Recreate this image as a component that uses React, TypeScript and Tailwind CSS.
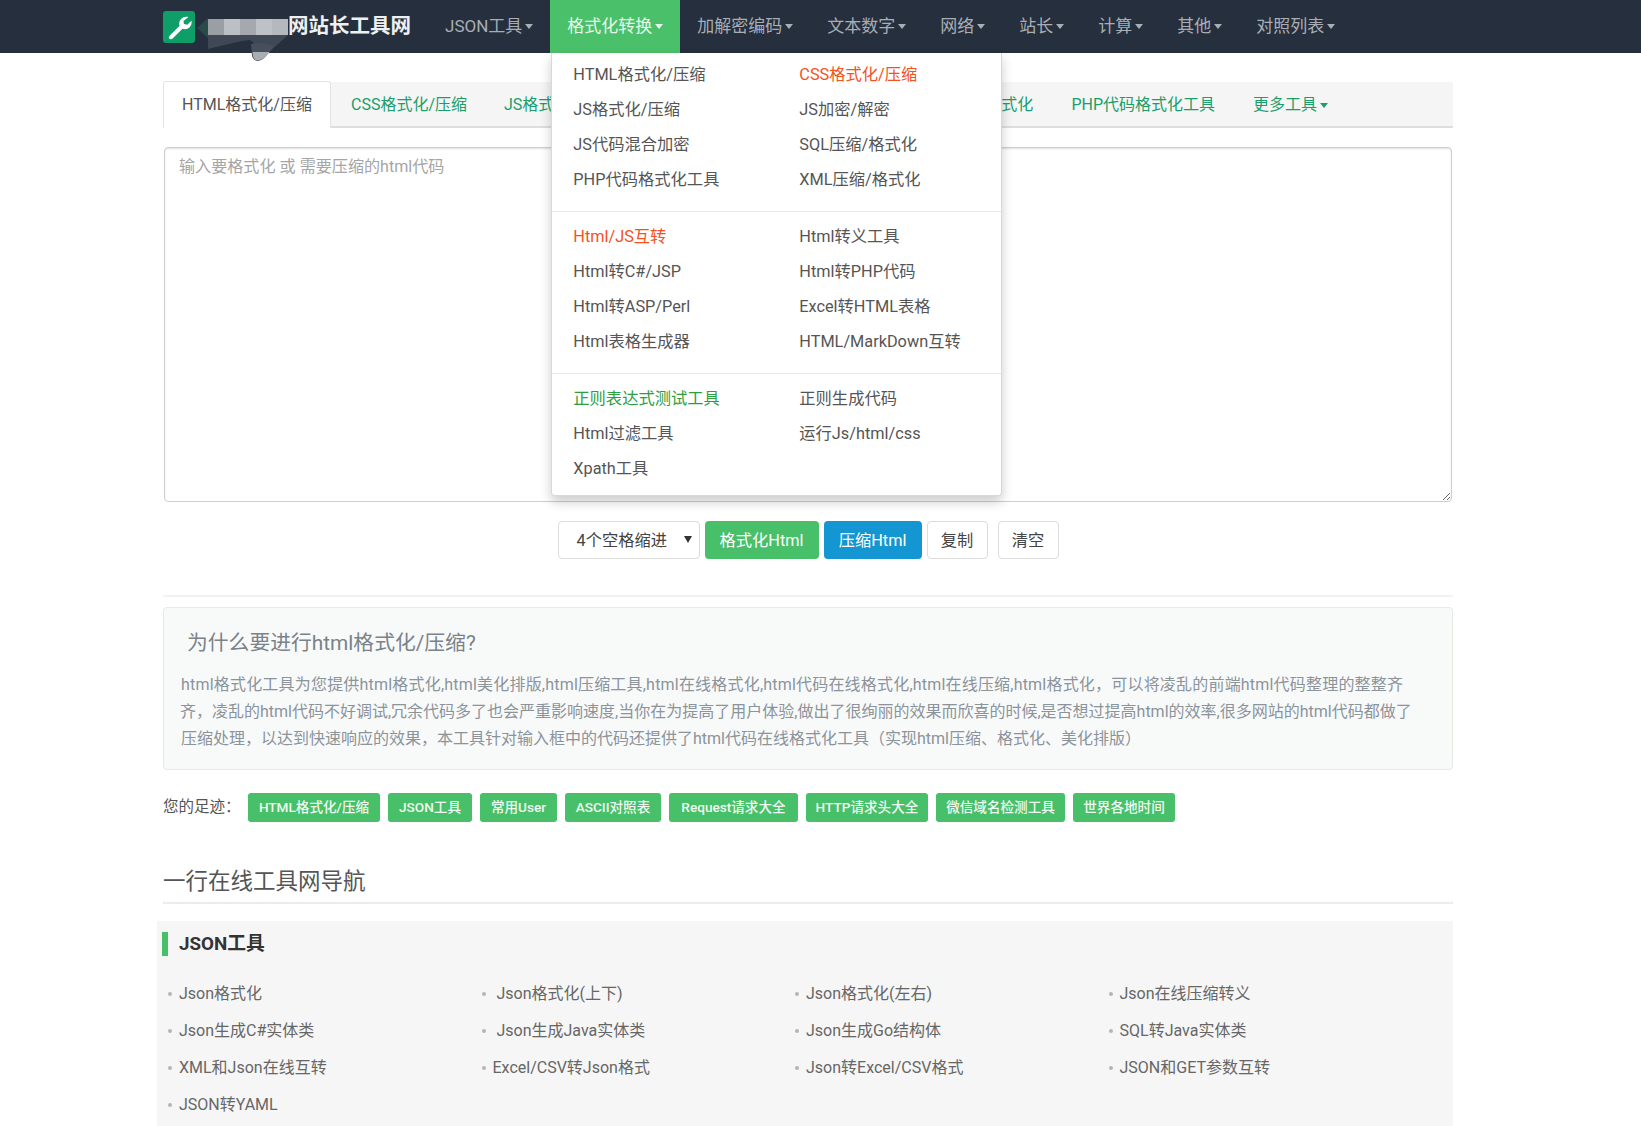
const navItems = ["JSON工具", "格式化转换", "加解密编码", "文本数字", "网络", "站长", "计算", "其他", "对照列表"];

type MenuLink = { text: string; color?: string };

const menuGroups: MenuLink[][] = [
  [
    { text: "HTML格式化/压缩" },
    { text: "CSS格式化/压缩", color: "text-[#f4511e]" },
    { text: "JS格式化/压缩" },
    { text: "JS加密/解密" },
    { text: "JS代码混合加密" },
    { text: "SQL压缩/格式化" },
    { text: "PHP代码格式化工具" },
    { text: "XML压缩/格式化" },
  ],
  [
    { text: "Html/JS互转", color: "text-[#f4511e]" },
    { text: "Html转义工具" },
    { text: "Html转C#/JSP" },
    { text: "Html转PHP代码" },
    { text: "Html转ASP/Perl" },
    { text: "Excel转HTML表格" },
    { text: "Html表格生成器" },
    { text: "HTML/MarkDown互转" },
  ],
  [
    { text: "正则表达式测试工具", color: "text-[#2e9e3f]" },
    { text: "正则生成代码" },
    { text: "Html过滤工具" },
    { text: "运行Js/html/css" },
    { text: "Xpath工具" },
  ],
];

const footprints = [
  { name: "HTML格式化/压缩", width: "w-[132px]" },
  { name: "JSON工具", width: "w-[84px]" },
  { name: "常用User", width: "w-[77px]" },
  { name: "ASCII对照表", width: "w-[96px]" },
  { name: "Request请求大全", width: "w-[129px]" },
  { name: "HTTP请求头大全", width: "w-[122px]" },
  { name: "微信域名检测工具", width: "w-[129px]" },
  { name: "世界各地时间", width: "w-[102px]" },
];

const jsonTools = [
  "Json格式化",
  "\u00a0Json格式化(上下)",
  "Json格式化(左右)",
  "Json在线压缩转义",
  "Json生成C#实体类",
  "\u00a0Json生成Java实体类",
  "Json生成Go结构体",
  "SQL转Java实体类",
  "XML和Json在线互转",
  "Excel/CSV转Json格式",
  "Json转Excel/CSV格式",
  "JSON和GET参数互转",
  "JSON转YAML",
];

function Caret({ className }: { className: string }) {
  return <span className={`ml-[3px] inline-block h-0 w-0 border-x-[4px] border-t-[5px] border-x-transparent align-middle ${className}`} />;
}

function FormatMenu() {
  return (
    <div className="absolute left-[1px] top-full z-20 w-[451px] rounded-b-[4px] border-x border-b border-[#d8d8d8] bg-white pb-[9px] pt-[4px] shadow-[0_6px_12px_rgba(0,0,0,0.2)]">
      {menuGroups.map((group, i) => (
        <div key={i}>
          {i > 0 && <div className="mb-[7.500px] mt-[13.500px] h-[1px] bg-[#e8e8e8]" />}
          <div className="grid grid-cols-[226px_224px]">
            {group.map((link) => (
              <div key={link.text} className={`h-[35px] whitespace-nowrap pl-[21px] text-[16.300px] font-normal leading-[35px] ${link.color ?? "text-[#555]"}`}>
                {link.text}
              </div>
            ))}
          </div>
        </div>
      ))}
    </div>
  );
}

function TopNav() {
  return (
    <div className="h-[53px] bg-[#252f3d]">
      <div className="ml-[163px] flex h-full w-[1290px] items-center">
        <div className="h-[32px] w-[32px] rounded-[3px] bg-[#0f9d68]">
          <svg width="32" height="32" viewBox="0 0 32 32">
            <path
              d="M25.500 6 C20.800 4.700 16.200 8 16.200 12.600 C16.200 13.400 16.300 14.100 16.600 14.800 L6.800 24.400 C5.500 25.700 5.500 27 6.500 27.800 C7.500 28.700 8.800 28.400 9.900 27.300 L19.500 17.800 C20.300 18.100 21.100 18.200 21.900 18.200 C26.300 18.200 29.500 14 28.400 9.700 L24.300 13.700 L21 13 L20.400 10 Z"
              fill="white"
            />
          </svg>
        </div>
        {/* site name is pixelated out in the picture */}
        <div className="relative ml-[13px] flex h-[16px] w-[80px]">
          <span className="flex-1 bg-[#9a9ea5]" />
          <span className="flex-1 bg-[#bcc0c4]" />
          <span className="flex-1 bg-[#a5a8ae]" />
          <span className="flex-1 bg-[#bec1c5]" />
          <span className="flex-1 bg-[#b5b8bc]" />
          <svg className="absolute left-[-14px] top-[-3px] z-10 overflow-visible" width="110" height="46" viewBox="0 0 110 46">
            <path d="M14 2 L3 12 L14 22 Z" fill="#2b4a4c" />
            <path d="M14 19 L94 19 L82 30 C70 38 66 32 56 24 C40 26 28 30 14 33 Z" fill="#3f4854" />
            <path d="M57 28 C68 26 78 28 80 31 L72 40 C66 47 60 46 58 40 Z" fill="#464f5b" />
            <path d="M58.500 36 L75.500 36 L71 41 C65 46 60 45 59 40 Z" fill="#a9aeb3" />
          </svg>
        </div>
        <div className="whitespace-nowrap text-[20.500px] font-bold text-[#eef0f2]">网站长工具网</div>
        <div className="ml-[17px] flex h-full">
          {navItems.map((item) => {
            const active = item === "格式化转换";
            return (
              <div key={item} className={`relative flex h-full items-center whitespace-nowrap px-[17px] text-[17px] ${active ? "bg-[#4bc06a] text-[#e8f8ec]" : "text-[#a9aeb5]"}`}>
                {item}
                <Caret className={active ? "border-t-[#e8f8ec]" : "border-t-[#a9aeb5]"} />
                {active && <FormatMenu />}
              </div>
            );
          })}
        </div>
      </div>
    </div>
  );
}

function TabBar() {
  return (
    <div className="flex h-[46px] items-center border-b-2 border-[#dedede] bg-[#f5f5f5] pt-[2px] text-[16px] text-[#1a9e6b]">
      <div className="-mb-[2px] flex h-[47px] w-[168px] self-end items-center justify-center rounded-t-[3px] border-x border-t border-[#e4e4e4] bg-white text-[#555]">
        HTML格式化/压缩
      </div>
      <div className="ml-[20px] whitespace-nowrap">CSS格式化/压缩</div>
      <div className="ml-[37px] whitespace-nowrap">JS格式化/压缩</div>
      <div className="ml-[38px] whitespace-nowrap">JS加密/解密</div>
      <div className="ml-[38px] whitespace-nowrap">SQL压缩/格式化</div>
      <div className="ml-[auto] mr-[38px] whitespace-nowrap">XML格式化</div>
      <div className="mr-[38px] whitespace-nowrap">PHP代码格式化工具</div>
      <div className="mr-[125px] whitespace-nowrap">
        更多工具
        <Caret className="border-t-[#1a9e6b]" />
      </div>
    </div>
  );
}

function Toolbar() {
  return (
    <div className="mt-[19px] flex justify-center text-[16.300px]">
      <div className="relative flex h-[38px] w-[142px] items-center rounded-[4px] border border-[#dcdcdc] bg-white pl-[18px] pt-[2px] text-[#444]">
        4个空格缩进
        <span className="absolute right-[7px] top-[14px] h-0 w-0 border-x-[4px] border-t-[7px] border-x-transparent border-t-[#333]" />
      </div>
      <div className="ml-[5px] flex h-[38px] w-[114px] items-center justify-center rounded-[4px] bg-[#48bf69] pt-[2px] text-white">格式化Html</div>
      <div className="ml-[5px] flex h-[38px] w-[98px] items-center justify-center rounded-[4px] bg-[#1396d1] pt-[2px] text-white">压缩Html</div>
      <div className="ml-[5px] flex h-[38px] w-[61px] items-center justify-center rounded-[4px] border border-[#dcdcdc] bg-white pt-[2px] text-[#444]">复制</div>
      <div className="ml-[10px] flex h-[38px] w-[61px] items-center justify-center rounded-[4px] border border-[#dcdcdc] bg-white pt-[2px] text-[#444]">清空</div>
    </div>
  );
}

function Intro() {
  return (
    <div className="mt-[10px] h-[163px] rounded-[4px] border border-[#e3ebe3] bg-[#f8fafa] pl-[17px] pt-[20px] text-[#8b939b]">
      <div className="pl-[6px] text-[20.800px] leading-[30px] text-[#7a828a]">为什么要进行html格式化/压缩?</div>
      <div className="mt-[12.500px] whitespace-nowrap text-[16px] leading-[27px]">
        <div className="tracking-[0.2px]">html格式化工具为您提供html格式化,html美化排版,html压缩工具,html在线格式化,html代码在线格式化,html在线压缩,html格式化，可以将凌乱的前端html代码整理的整整齐</div>
        <div className="-ml-[1px]">齐，凌乱的html代码不好调试,冗余代码多了也会严重影响速度,当你在为提高了用户体验,做出了很绚丽的效果而欣喜的时候,是否想过提高html的效率,很多网站的html代码都做了</div>
        <div>压缩处理，以达到快速响应的效果，本工具针对输入框中的代码还提供了html代码在线格式化工具（实现html压缩、格式化、美化排版）</div>
      </div>
    </div>
  );
}

function Footprints() {
  return (
    <div className="mt-[23px] flex items-center">
      <span className="w-[85px] text-[15.500px] text-[#555]">您的足迹：</span>
      <div className="flex gap-[8px]">
        {footprints.map((tag) => (
          <span key={tag.name} className={`flex h-[29px] items-center justify-center whitespace-nowrap rounded-[3px] bg-[#48bf69] text-[13.600px] font-medium text-[#eefaf1] ${tag.width}`}>
            {tag.name}
          </span>
        ))}
      </div>
    </div>
  );
}

function JsonPanel() {
  return (
    <div className="-ml-[6px] mt-[17px] bg-[#f6f6f6] pb-[10px] pt-[11px]">
      <div className="ml-[5px] flex h-[24px] items-center border-l-[6px] border-[#48bf69] pl-[11px] text-[18.800px] font-bold text-[#333]">JSON工具</div>
      <div className="mt-[19.500px] grid grid-cols-[313.500px_313.500px_313.500px_313.500px] pl-[11px] text-[16px] text-[#666]">
        {jsonTools.map((name) => (
          <div key={name} className="flex h-[37px] items-center whitespace-pre">
            <span className="mr-[7px] h-[4px] w-[4px] rounded-full bg-[#b5b5b5]" />
            {name}
          </div>
        ))}
      </div>
    </div>
  );
}

export default function App() {
  return (
    <div className="h-screen overflow-hidden bg-white font-['Roboto','Noto_Sans_CJK_SC',sans-serif]">
      <TopNav />
      <div className="ml-[163px] w-[1290px] pt-[29px]">
        <TabBar />
        <textarea
          className="ml-[1px] mt-[19px] block h-[355px] w-[1288px] rounded-[4px] border border-[#cfcfcf] px-[14px] py-[7px] text-[16.100px] shadow-[inset_0_1px_2px_rgba(0,0,0,0.12)] outline-none placeholder:text-[#a5a5a5]"
          placeholder="输入要格式化 或 需要压缩的html代码"
        />
        <Toolbar />
        <div className="mt-[36px] h-[2px] bg-[#f2f2f2]" />
        <Intro />
        <Footprints />
        <div className="mt-[43px] border-b-2 border-[#ececec] pb-[4px] text-[22.500px] leading-[33px] text-[#555]">一行在线工具网导航</div>
        <JsonPanel />
      </div>
    </div>
  );
}
